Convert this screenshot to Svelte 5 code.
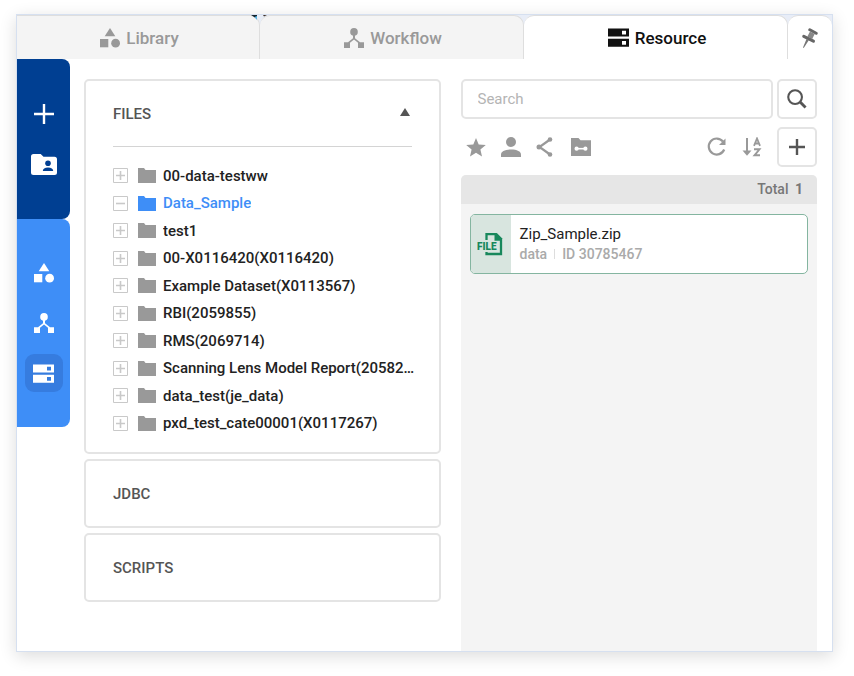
<script>
  const folders = [
    '00-data-testww',
    'Data_Sample',
    'test1',
    '00-X0116420(X0116420)',
    'Example Dataset(X0113567)',
    'RBI(2059855)',
    'RMS(2069714)',
    'Scanning Lens Model Report(20582…',
    'data_test(je_data)',
    'pxd_test_cate00001(X0117267)'
  ];
  let selected = $state('Data_Sample');
  let open = $state(true);
  let query = $state('');
</script>

{#snippet shapes()}
  <svg width="20" height="20" viewBox="0 0 20 20" fill="currentColor" aria-hidden="true">
    <path d="M10 0l5.3 8.3H4.7z" /><path d="M0 11h8.3v8.3H0z" /><circle cx="15.6" cy="15.2" r="4.4" />
  </svg>
{/snippet}

{#snippet flow()}
  <svg width="20" height="20" viewBox="0 0 20 20" fill="currentColor" aria-hidden="true">
    <circle cx="10" cy="3.9" r="3.8" />
    <path d="M9 6h2v4.2l5 4.1h4V20h-6v-5.2L10 11.6l-4 3.2V20H0v-5.7h4l5-4.1z" />
  </svg>
{/snippet}

{#snippet server()}
  <svg width="21" height="19" viewBox="0 0 21 19" fill="currentColor" fill-rule="evenodd" aria-hidden="true">
    <path d="M0 .5h21v8H0zM14 2.7v3.7h4V2.7z" /><path d="M0 10.8h21v8H0zM14 13v3.7h4V13z" />
  </svg>
{/snippet}

{#snippet plus()}
  <svg width="20" height="20" viewBox="0 0 20 20" stroke="currentColor" stroke-width="2.4" aria-hidden="true">
    <path d="M10 0v20M0 10h20" />
  </svg>
{/snippet}

<div class="window">
  <div class="tabs" role="tablist">
    <button class="tab" role="tab" aria-selected="false">{@render shapes()}Library</button>
    <button class="tab" role="tab" aria-selected="false">
      <svg class="seam" width="16" height="6" viewBox="0 0 16 6" aria-hidden="true">
        <path d="M0 0h6v4z" fill="#12232d" /><path d="M6 1v4L3.5 2z" fill="#5bb8e8" /><path d="M12 0h4l-3 1.5z" fill="#42352d" />
      </svg>
      {@render flow()}Workflow
    </button>
    <button class="tab active" role="tab" aria-selected="true">{@render server()}Resource</button>
    <button class="pin" aria-label="Pin">
      <svg width="16" height="20" viewBox="0 0 16 20" aria-hidden="true">
        <path d="M7.8 1.8l6.4 3.4" stroke="#666" stroke-width="3" stroke-linecap="round" />
        <path d="M8 3.5l4.7 2.4-2.5 5-4.800-2.500z" fill="#888" />
        <path d="M1.800 8.300l9.600 4.900" stroke="#666" stroke-width="3" stroke-linecap="round" />
        <path d="M4.500 11l2.300 1.200L1.700 20l-.7-.4z" fill="#777" />
      </svg>
    </button>
  </div>

  <div class="body">
    <nav class="rail">
      <div class="rail-top">
        <button aria-label="Add">{@render plus()}</button>
        <button aria-label="Shared folder">
          <svg width="26" height="21" viewBox="0 0 26 21" aria-hidden="true">
            <path d="M2.5 0h7.2l2.8 2.8h11A2.5 2.5 0 0126 5.3v13.2a2.5 2.5 0 01-2.5 2.5h-21A2.5 2.5 0 010 18.5V2.5A2.5 2.5 0 012.5 0z" fill="#fff" />
            <circle cx="17" cy="9.3" r="2.8" fill="#003f92" /><path d="M11.8 17c0-2 2-3.5 5.2-3.5s5.2 1.5 5.2 3.5z" fill="#003f92" />
          </svg>
        </button>
      </div>
      <div class="rail-bottom">
        <button aria-label="Library">{@render shapes()}</button>
        <button aria-label="Workflow">{@render flow()}</button>
        <button class="current" aria-label="Resource">{@render server()}</button>
      </div>
    </nav>

    <div class="groups">
      <section class="panel">
        <button class="panel-head" aria-expanded={open} onclick={() => (open = !open)}>
          FILES
          <svg class:closed={!open} width="10" height="12" viewBox="0 0 10 12" aria-hidden="true"><path d="M5 0l5 8H0z" fill="#555" /></svg>
        </button>
        {#if open}
          <ul>
            {#each folders as name}
              <li>
                <button class="row" class:selected={name === selected} onclick={() => (selected = name)}>
                  <svg width="15" height="15" viewBox="0 0 15 15" fill="none" stroke="#c9c9c9" aria-hidden="true">
                    <path d="M.5 .5h14v14H.5z" />
                    <path d={name === selected ? 'M3 7.5h9' : 'M3 7.5h9M7.5 3v9'} stroke-width="1.6" />
                  </svg>
                  <svg class="folder" width="18" height="15" viewBox="0 0 18 15" fill="currentColor" aria-hidden="true">
                    <path d="M0 0h6l1.5 2H18v13H0z" />
                  </svg>
                  <span>{name}</span>
                </button>
              </li>
            {/each}
          </ul>
        {/if}
      </section>
      <section class="panel"><button class="panel-head" aria-expanded="false">JDBC</button></section>
      <section class="panel"><button class="panel-head" aria-expanded="false">SCRIPTS</button></section>
    </div>

    <main>
      <div class="search">
        <input type="text" placeholder="Search" aria-label="Search" bind:value={query} />
        <button class="box" aria-label="Search">
          <svg width="20" height="20" viewBox="0 0 21 21" fill="none" stroke="currentColor" aria-hidden="true">
            <circle cx="8.5" cy="8.5" r="7.2" stroke-width="2.2" /><path d="M13.5 13.5l6 6" stroke-width="3" />
          </svg>
        </button>
      </div>
      <div class="tools">
        <button aria-label="Favorites">
          <svg width="20" height="19" viewBox="0 0 20 19" fill="currentColor" aria-hidden="true"><path d="M10 0l2.7 6.4 7.1.6-5.4 4.6L16 18.5l-6-3.7-6 3.7 1.6-6.9L.2 7l7.1-.6z" /></svg>
        </button>
        <button aria-label="Mine">
          <svg width="20" height="20" viewBox="0 0 20 20" fill="currentColor" aria-hidden="true"><circle cx="10" cy="5" r="5" /><path d="M0 20v-2.5C0 14.5 4 12.5 10 12.5s10 2 10 5V20z" /></svg>
        </button>
        <button aria-label="Shared">
          <svg width="20" height="20" viewBox="0 0 20 20" aria-hidden="true">
            <path d="M14 2.5L3.5 10 14 17.5" fill="none" stroke="currentColor" stroke-width="2.2" />
            <g fill="currentColor"><circle cx="14" cy="2.5" r="2.3" /><circle cx="3" cy="10" r="2.5" /><circle cx="14" cy="17.5" r="2.3" /></g>
          </svg>
        </button>
        <button aria-label="Linked folder">
          <svg width="20" height="18" viewBox="0 0 20 18" aria-hidden="true">
            <path d="M0 0h7.5l2 2.2H20V18H0z" fill="currentColor" />
            <path d="M5.5 10.7h9" stroke="#fff" stroke-width="1.6" /><circle cx="5.6" cy="10.7" r="2.1" fill="#fff" /><circle cx="14.4" cy="10.7" r="2.1" fill="#fff" />
          </svg>
        </button>
        <span class="spacer"></span>
        <button aria-label="Refresh">
          <svg width="20" height="20" viewBox="0 0 20 20" aria-hidden="true">
            <path d="M17.2 12.5A8 8 0 1 1 16 4.5" fill="none" stroke="currentColor" stroke-width="2.2" /><path d="M18.5 1.5v6.5h-6.5z" fill="currentColor" />
          </svg>
        </button>
        <button aria-label="Sort A to Z">
          <svg width="20" height="20" viewBox="0 0 20 20" aria-hidden="true" fill="none" stroke="currentColor">
            <path d="M5 1v15" stroke-width="2" /><path d="M.5 13.5h9L5 18.8z" fill="currentColor" stroke="none" />
            <path d="M12 8.8L15 1.5l3 7.3M13 6.5h4" stroke-width="1.8" /><path d="M12 12.3h5.5l-5 6H18" stroke-width="1.9" />
          </svg>
        </button>
        <button class="box add" aria-label="Add resource">
          <svg width="16" height="16" viewBox="0 0 16 16" stroke="currentColor" stroke-width="2.4" aria-hidden="true"><path d="M8 0v16M0 8h16" /></svg>
        </button>
      </div>
      <section class="results">
        <header>Total <b>1</b></header>
        <article>
          <div class="badge">
            <svg width="27" height="24" viewBox="0 0 27 24" aria-hidden="true">
              <path d="M9.5 8V2.2h9.5l5 5V22H9.5v-2" fill="none" stroke="#18885c" stroke-width="2.3" /><path d="M17.5 1.2h2.5l5 5v2.5h-7.5z" fill="#18885c" />
              <text x="0" y="18" font-size="10" font-weight="900" fill="#18885c">FILE</text>
            </svg>
          </div>
          <div class="info">
            <h3>Zip_Sample.zip</h3>
            <p><span>data</span><i></i><span>ID 30785467</span></p>
          </div>
        </article>
      </section>
    </main>
  </div>
</div>

<style>
  :global(body) {
    margin: 0;
    background: #fff;
  }
  .window {
    box-sizing: border-box;
    display: flex;
    flex-direction: column;
    min-height: calc(100vh - 38px);
    margin: 14px 21px 24px 16px;
    border: 1px solid #d6e0f0;
    background: #fff;
    box-shadow: 0 4px 16px rgba(0, 0, 0, 0.14);
    font-family: Roboto, sans-serif;
    font-weight: 500;
    font-size: 15px;
  }
  button {
    display: flex;
    align-items: center;
    justify-content: center;
    padding: 0;
    border: 0;
    background: none;
    color: inherit;
    font: inherit;
    cursor: pointer;
  }
  svg {
    flex: none;
  }
  .tabs {
    display: flex;
    height: 44px;
    background: #e8edf7;
  }
  .seam {
    position: absolute;
    left: -9px;
    top: -1px;
  }
  .tab {
    position: relative;
    flex: 1;
    box-sizing: border-box;
    gap: 6px;
    padding-left: 3px;
    border: solid #dedede;
    border-width: 1px 1px 0 0;
    border-radius: 0 10px 0 0;
    background: #f4f4f4;
    color: #999;
    font-size: 17px;
  }
  .tab + .tab {
    border-radius: 10px 10px 0 0;
  }
  .tab:first-of-type {
    flex: 0 1 243px;
  }
  .tab.active {
    background: #fff;
    color: #111;
  }
  .pin {
    width: 44px;
    border-top: 1px solid #dedede;
    border-radius: 10px 10px 0 0;
    background: #fff;
  }
  .body {
    flex: 1;
    display: flex;
    padding-right: 15px;
  }
  .rail {
    width: 53px;
    color: #fff;
  }
  .rail div {
    display: flex;
    flex-direction: column;
    align-items: center;
    border-radius: 0 8px 8px 0;
  }
  .rail button {
    width: 38px;
    height: 38px;
    border-radius: 9px;
  }
  .rail-top {
    gap: 12px;
    padding: 36px 0;
    background: #003f92;
  }
  .rail-bottom {
    gap: 12px;
    padding: 35px 0;
    background: #3e8ef7;
  }
  .rail .current {
    background: #367cdf;
  }
  .groups {
    flex: 1;
    min-width: 0;
    display: flex;
    flex-direction: column;
    gap: 5px;
    margin-left: 14px;
    padding-top: 20px;
  }
  .panel {
    border: 2px solid #e4e4e4;
    border-radius: 5px;
    padding: 0 27px;
  }
  .panel-head {
    width: 100%;
    height: 65px;
    justify-content: space-between;
    color: #555;
  }
  .panel-head svg {
    margin-right: 2px;
  }
  .panel-head svg.closed {
    transform: rotate(180deg);
  }
  ul {
    display: grid;
    grid-auto-rows: 1fr;
    height: 275px;
    margin: 0 0 15px;
    padding: 15px 0 0;
    border-top: 1px solid #d4d4d4;
    list-style: none;
  }
  li {
    display: grid;
    min-width: 0;
  }
  .row {
    justify-content: flex-start;
    min-width: 0;
    margin-right: -12px;
    color: #222;
  }
  .row span {
    overflow: hidden;
    margin-left: 7px;
    text-overflow: ellipsis;
    white-space: nowrap;
  }
  .row .folder {
    margin-left: 10px;
    color: #999;
  }
  .row.selected,
  .row.selected .folder {
    color: #3e8ef7;
  }
  main {
    flex: 1;
    min-width: 0;
    display: flex;
    flex-direction: column;
    margin-left: 20px;
    padding-top: 20px;
  }
  .search {
    display: flex;
    gap: 4px;
  }
  input {
    flex: 1;
    min-width: 0;
    box-sizing: border-box;
    height: 40px;
    padding: 0 15px;
    border: 2px solid #e4e4e4;
    border-radius: 5px;
    font: 400 15px Roboto, sans-serif;
    color: #333;
  }
  input::placeholder {
    color: #b4b4b4;
  }
  .box {
    box-sizing: border-box;
    width: 40px;
    height: 40px;
    border: 2px solid #e4e4e4;
    border-radius: 5px;
    color: #555;
  }
  .tools {
    display: flex;
    align-items: center;
    gap: 15px;
    margin: 8px 0;
    padding-left: 5px;
    color: #999;
  }
  .tools .add {
    color: #555;
  }
  .spacer {
    flex: 1;
  }
  .results {
    flex: 1;
    border-radius: 5px 5px 0 0;
    background: #f4f4f4;
  }
  .results header {
    height: 29px;
    padding: 0 14px;
    border-radius: 5px 5px 0 0;
    background: #e6e6e6;
    color: #777;
    font-size: 14px;
    line-height: 29px;
    text-align: right;
  }
  b {
    margin-left: 3px;
    font-weight: 700;
  }
  article {
    display: flex;
    overflow: hidden;
    height: 58px;
    margin: 10px 9px;
    border: 1px solid #84b5a0;
    border-radius: 5px;
    background: #fff;
  }
  .badge {
    display: grid;
    place-items: center;
    width: 40px;
    background: #d8e5df;
  }
  .info {
    padding: 9px;
  }
  h3,
  p {
    margin: 0;
    font-size: 15px;
    font-weight: 400;
    line-height: 20px;
    color: #222;
  }
  p {
    display: flex;
    align-items: center;
    font-size: 14px;
    font-weight: 500;
    color: #aaa;
  }
  i {
    width: 1px;
    height: 10px;
    margin: 0 7px;
    background: #ddd;
  }
</style>
